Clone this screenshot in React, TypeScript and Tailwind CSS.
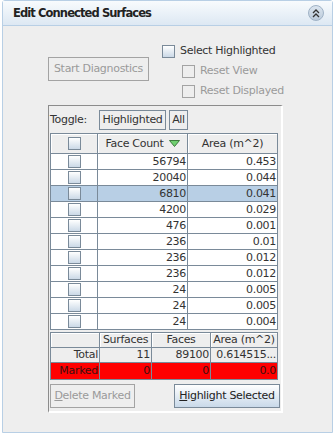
import type { ReactNode } from 'react';

const FONT = { fontFamily: '"DejaVu Sans", sans-serif' };

// row data of the connected-surfaces table
const ROWS: [string, string][] = [
  ['56794', '0.453'],
  ['20040', '0.044'],
  ['6810', '0.041'],
  ['4200', '0.029'],
  ['476', '0.001'],
  ['236', '0.01'],
  ['236', '0.012'],
  ['236', '0.012'],
  ['24', '0.005'],
  ['24', '0.005'],
  ['24', '0.004'],
];
const SELECTED_ROW = 2;

const CELL = 'flex items-center justify-end border-r border-b border-[#7a8a99] pr-[1px] whitespace-nowrap';

function CheckBox({ disabled = false }: { disabled?: boolean }) {
  return (
    <span
      className={
        disabled
          ? 'block h-[13px] w-[13px] shrink-0 border border-[#a3a3a3] bg-[#eeeeee]'
          : 'block h-[13px] w-[13px] shrink-0 border border-[#7a8a99] bg-gradient-to-b from-[#ffffff] to-[#cbd9e7]'
      }
    />
  );
}

function CheckRow({ label, disabled = false }: { label: string; disabled?: boolean }) {
  return (
    <div className="flex h-[20px] items-center gap-[5px] whitespace-nowrap">
      <CheckBox disabled={disabled} />
      <span className={disabled ? 'text-[#9a9a9a]' : 'text-[#333333]'}>{label}</span>
    </div>
  );
}

function HeadCell({ children, className = '' }: { children?: ReactNode; className?: string }) {
  return (
    <div
      className={`flex items-center justify-center whitespace-nowrap border-r border-b border-[#7a8a99] bg-[#eeeeee] shadow-[inset_1px_1px_0_#ffffff] ${className}`}
    >
      {children}
    </div>
  );
}

function SortArrow() {
  return (
    <svg width="11" height="7" viewBox="0 0 11 7" className="ml-[5px]">
      <path d="M0.5 0.5 H10.5 L5.5 6.5 Z" fill="#6fcf6f" stroke="#3d7a3d" strokeWidth="1" />
    </svg>
  );
}

export default function App() {
  return (
    <div className="h-[434px] w-[335px] bg-white text-[11px] leading-[14px] tracking-[-0.3px] text-[#333333]" style={FONT}>
      <div className="ml-[2px] flex h-[433px] w-[331px] flex-col rounded-t-[3px] border border-[#b8cfe5] bg-[#eeeeee]">
        {/* Header */}
        <div className="flex h-[25px] shrink-0 items-center justify-between border-b border-[#b8cfe5] bg-gradient-to-b from-[#f8fbfd] to-[#dde8f3] pr-[8px] pl-[10px]">
          <span className="text-[11.5px] font-bold tracking-[-0.9px] text-[#222222]">Edit Connected Surfaces</span>
          <span className="flex h-[16px] w-[16px] items-center justify-center rounded-full border border-[#9fb2c6] bg-gradient-to-b from-[#dbe5ef] to-[#bccbdb]">
            <svg width="8" height="9" viewBox="0 0 8 9">
              <path d="M1 4 L4 1 L7 4 M1 8 L4 5 L7 8" fill="none" stroke="#333333" strokeWidth="1.3" />
            </svg>
          </span>
        </div>

        {/* Body */}
        <div className="flex flex-col pl-[45px]">
          {/* diagnostics controls */}
          <div className="flex pt-[15px]">
            <button
              type="button"
              className="mt-[16px] h-[24px] w-[101px] whitespace-nowrap border border-[#a3a3a3] bg-[#eeeeee] text-[#9a9a9a]"
            >
              Start Diagnostics
            </button>
            <div className="ml-[13px] flex flex-col">
              <CheckRow label="Select Highlighted" />
              <div className="pl-[20px]">
                <CheckRow label="Reset View" disabled />
                <CheckRow label="Reset Displayed" disabled />
              </div>
            </div>
          </div>

          {/* table panel */}
          <div className="mt-[4px] flex h-[308px] w-[235px] flex-col border-t border-l border-t-[#8c8c8c] border-l-[#8c8c8c] border-r-2 border-b-2 border-r-white border-b-white pl-[1px]">
            {/* toggle row */}
            <div className="flex h-[27px] items-center whitespace-nowrap">
              <span className="w-[49px]">Toggle:</span>
              <button type="button" className="h-[20px] w-[67px] border border-[#7a8a99] bg-[#eeeeee]">
                Highlighted
              </button>
              <button type="button" className="ml-[3px] h-[20px] w-[19px] border border-[#7a8a99] bg-[#eeeeee]">
                All
              </button>
            </div>

            {/* main table */}
            <div className="w-[228px] border-l border-[#7a8a99]">
              <div className="grid h-[21px] grid-cols-[47px_90px_90px] border-t border-[#7a8a99]">
                <HeadCell>
                  <CheckBox />
                </HeadCell>
                <HeadCell>
                  Face Count
                  <SortArrow />
                </HeadCell>
                <HeadCell>Area (m^2)</HeadCell>
              </div>
              {ROWS.map(([faces, area], i) => (
                <div
                  key={i}
                  className={`grid h-[16px] grid-cols-[47px_90px_90px] ${i === SELECTED_ROW ? 'bg-[#b8cfe5]' : 'bg-white'}`}
                >
                  <div className="flex items-center justify-center border-r border-b border-[#7a8a99]">
                    <CheckBox />
                  </div>
                  <div className={CELL}>{faces}</div>
                  <div className={CELL}>{area}</div>
                </div>
              ))}
            </div>

            {/* summary table */}
            <div className="mt-[2px] w-[228px] border-t border-l border-[#7a8a99]">
              <div className="grid h-[15px] grid-cols-[49px_52px_59px_67px]">
                <HeadCell />
                <HeadCell>Surfaces</HeadCell>
                <HeadCell>Faces</HeadCell>
                <HeadCell>Area (m^2)</HeadCell>
              </div>
              <div className="grid h-[15px] grid-cols-[49px_52px_59px_67px] bg-[#eeeeee]">
                <div className={CELL}>Total</div>
                <div className={CELL}>11</div>
                <div className={CELL}>89100</div>
                <div className={`${CELL} overflow-hidden`}>0.614515...</div>
              </div>
              <div className="grid h-[17px] grid-cols-[49px_52px_59px_67px] bg-[#ff0000] text-[#3a1010]">
                <div className={CELL}>Marked</div>
                <div className={CELL}>0</div>
                <div className={CELL}>0</div>
                <div className={CELL}>0.0</div>
              </div>
            </div>

            {/* actions */}
            <div className="mt-[4px] flex w-[230px] justify-between whitespace-nowrap">
              <button type="button" className="h-[24px] w-[85px] border border-[#a3a3a3] bg-[#eeeeee] text-[#9a9a9a]">
                <span className="underline">D</span>elete Marked
              </button>
              <button
                type="button"
                className="h-[24px] w-[106px] border border-[#7a8a99] bg-gradient-to-b from-[#ffffff] to-[#c9d9e9] text-[#222222]"
              >
                <span className="underline">H</span>ighlight Selected
              </button>
            </div>
          </div>
        </div>
      </div>
    </div>
  );
}
